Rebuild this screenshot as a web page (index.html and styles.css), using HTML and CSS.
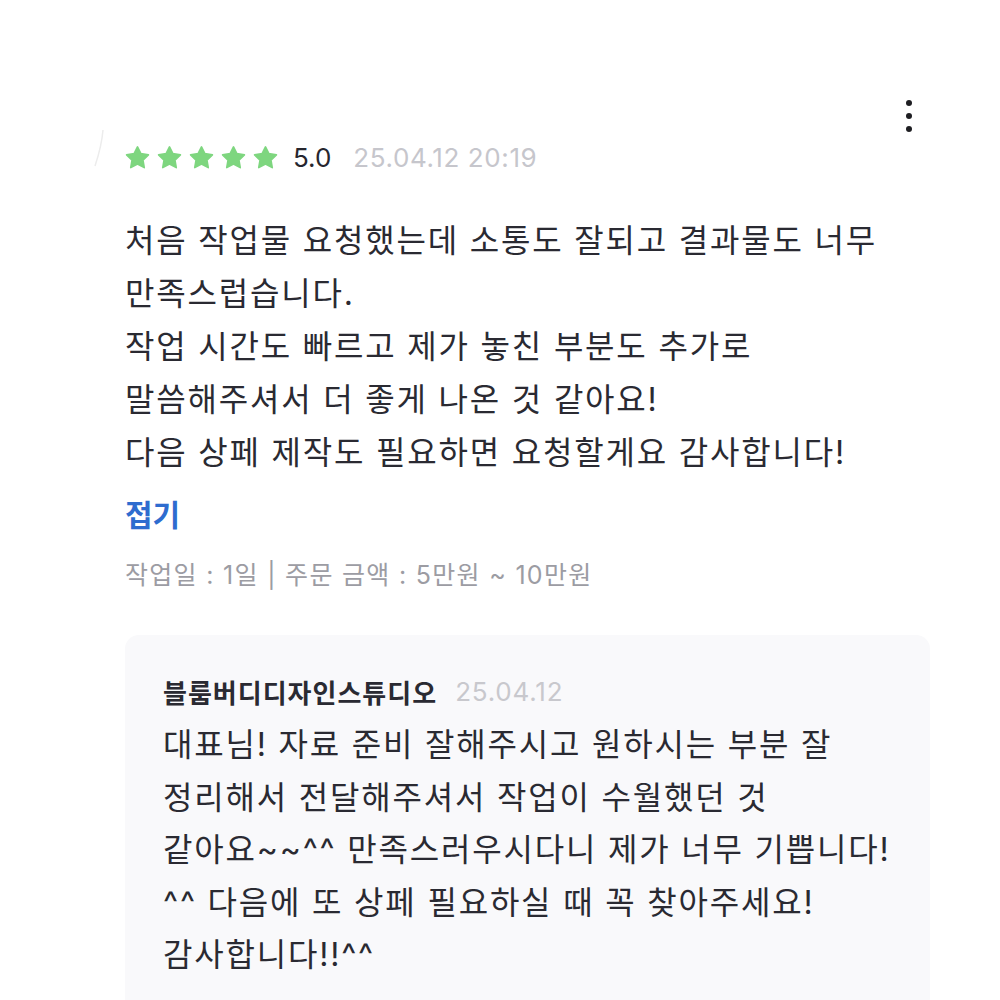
FILE: index.html
```html
<!DOCTYPE html>
<html lang="ko">

<head>
    <meta charset="UTF-8">
    <meta name="viewport" content="width=device-width, initial-scale=1.0">
    <title>Review</title>
    <link rel="stylesheet" href="styles.css">
</head>

<body>
    <div class="review">
        <div class="top-bar">
            <svg class="edge" width="12" height="40" viewBox="0 0 12 40">
                <path d="M10 2 C9 14 6 26 2 38" stroke="#ececec" stroke-width="1.5" fill="none"/>
            </svg>
            <button class="kebab" aria-label="more">
                <span></span><span></span><span></span>
            </button>
        </div>
        <div class="rating-row">
            <div class="stars">
                <svg viewBox="0 0 24 24"><path d="M12 1.8L15.23 8.35 22.46 9.4 17.23 14.5 18.47 21.7 12 18.3 5.53 21.7 6.77 14.5 1.54 9.4 8.77 8.35Z"/></svg>
                <svg viewBox="0 0 24 24"><path d="M12 1.8L15.23 8.35 22.46 9.4 17.23 14.5 18.47 21.7 12 18.3 5.53 21.7 6.77 14.5 1.54 9.4 8.77 8.35Z"/></svg>
                <svg viewBox="0 0 24 24"><path d="M12 1.8L15.23 8.35 22.46 9.4 17.23 14.5 18.47 21.7 12 18.3 5.53 21.7 6.77 14.5 1.54 9.4 8.77 8.35Z"/></svg>
                <svg viewBox="0 0 24 24"><path d="M12 1.8L15.23 8.35 22.46 9.4 17.23 14.5 18.47 21.7 12 18.3 5.53 21.7 6.77 14.5 1.54 9.4 8.77 8.35Z"/></svg>
                <svg viewBox="0 0 24 24"><path d="M12 1.8L15.23 8.35 22.46 9.4 17.23 14.5 18.47 21.7 12 18.3 5.53 21.7 6.77 14.5 1.54 9.4 8.77 8.35Z"/></svg>
            </div>
            <span class="score">5.0</span>
            <span class="date">25.04.12 20:19</span>
        </div>
        <p class="content">처음 작업물 요청했는데 소통도 잘되고 결과물도 너무<br>만족스럽습니다.<br>작업 시간도 빠르고 제가 놓친 부분도 추가로<br>말씀해주셔서 더 좋게 나온 것 같아요!<br>다음 상페 제작도 필요하면 요청할게요 감사합니다!</p>
        <button class="fold">접기</button>
        <p class="meta">작업일 : 1일 | 주문 금액 : 5만원 ~ 10만원</p>
        <div class="reply">
            <div class="reply-head">
                <span class="seller">블룸버디디자인스튜디오</span>
                <span class="reply-date">25.04.12</span>
            </div>
            <p class="reply-text">대표님! 자료 준비 잘해주시고 원하시는 부분 잘<br>정리해서 전달해주셔서 작업이 수월했던 것<br>같아요~~^^ 만족스러우시다니 제가 너무 기쁩니다!<br>^^ 다음에 또 상페 필요하실 때 꼭 찾아주세요!<br>감사합니다!!^^</p>
        </div>
    </div>
</body>

</html>
```

FILE: styles.css
```css
body {
    margin: 0;
    background-color: #ffffff;
    font-family: Inter, "Noto Sans CJK KR", "Noto Sans", sans-serif;
    color: #2a2a32;
}

.review {
    padding: 100px 70px 0 125px;
}

.top-bar {
    display: flex;
    justify-content: flex-end;
    position: relative;
    height: 34px;
    padding-right: 18px;
}

.edge {
    position: absolute;
    left: -32px;
    top: 28px;
}

.kebab {
    display: flex;
    flex-direction: column;
    gap: 7px;
    padding: 0;
    border: none;
    background: none;
}

.kebab span {
    width: 6px;
    height: 6px;
    border-radius: 50%;
    background-color: #1e1e22;
}

.rating-row {
    display: flex;
    align-items: center;
    height: 46px;
}

.stars {
    display: flex;
    gap: 7px;
    margin-right: 15px;
}

.stars svg {
    flex: none;
    width: 25px;
    height: 25px;
    fill: #7ed67f;
    stroke: #7ed67f;
    stroke-width: 1.6;
    stroke-linejoin: round;
}

.score {
    font-size: 26px;
    color: #26262e;
    margin-right: 22px;
}

.date {
    font-size: 26px;
    letter-spacing: 0.6px;
    color: #c6c6cc;
}

.content {
    margin: 34px 0 0;
    font-size: 32px;
    line-height: 53px;
    letter-spacing: 1.8px;
}

.fold {
    display: block;
    margin-top: 14px;
    padding: 0;
    border: none;
    background: none;
    font-family: inherit;
    font-size: 30px;
    font-weight: 700;
    color: #2e6ccf;
    line-height: 44px;
}

.meta {
    margin: 20px 0 0;
    font-size: 25px;
    line-height: 36px;
    letter-spacing: 1.3px;
    color: #9c9ca3;
}

.reply {
    margin-top: 42px;
    padding: 34px 38px 30px;
    border-radius: 14px;
    background-color: #f9f9fb;
}

.reply-head {
    display: flex;
    align-items: center;
    gap: 18px;
    height: 44px;
}

.seller {
    font-size: 26px;
    font-weight: 700;
    color: #2a2a32;
    letter-spacing: 1px;
}

.reply-date {
    font-size: 26px;
    letter-spacing: 0.8px;
    color: #c8c8cd;
}

.reply-text {
    margin: 6px 0 0;
    font-size: 32px;
    line-height: 52.5px;
    letter-spacing: 1.8px;
}
```
